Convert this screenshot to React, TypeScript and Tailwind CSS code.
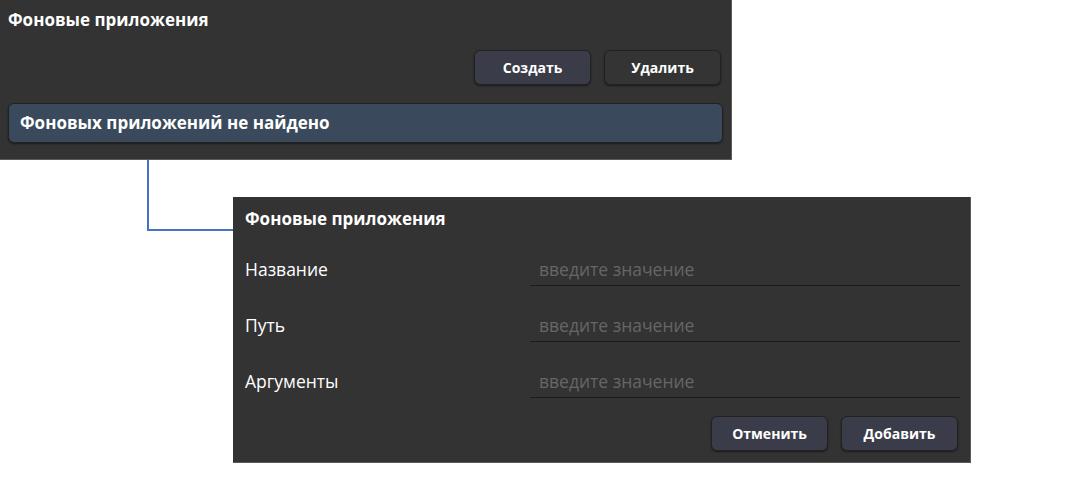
import React from 'react';

const font = { fontFamily: '"Open Sans", "Noto Sans", sans-serif' };

const Btn: React.FC<{ label: string; filled?: boolean }> = ({ label, filled }) => (
  <button
    className={
      filled
        ? 'w-[117px] h-[35px] rounded-md border border-[#222] bg-[#3b3c49] text-white text-[14px] font-bold shadow-[0_1px_2px_rgba(0,0,0,0.5)]'
        : 'w-[117px] h-[35px] rounded-md border border-[#222] bg-[#343434] text-white text-[14px] font-bold shadow-[0_1px_2px_rgba(0,0,0,0.5)]'
    }
  >
    {label}
  </button>
);

const Field: React.FC<{ label: string }> = ({ label }) => (
  <div className="flex items-end h-[56px]">
    <span className="w-[285px] text-white text-[17.5px] pb-[4px]">{label}</span>
    <div className="flex-1 border-b border-[#1c1c1c] pl-[9px] pb-[3px] text-[17.5px] text-[#666]">
      введите значение
    </div>
  </div>
);

export default function App() {
  return (
    <div className="w-[1072px] h-[485px] bg-white" style={font}>
      {/* list panel */}
      <div className="w-[732px] h-[160px] bg-[#333] border-r border-b border-[#5a5a5a] px-[8px] pt-[7px]">
        <div className="text-white text-[17px] font-bold leading-[26px]">Фоновые приложения</div>
        <div className="flex justify-end gap-[13px] mt-[17px] pr-[2px]">
          <Btn label="Создать" filled />
          <Btn label="Удалить" />
        </div>
        <div className="mt-[18px] h-[40px] rounded-md border border-[#222] bg-[#3a4a5c] flex items-center px-[11px] text-white text-[17px] font-bold shadow-[0_1px_2px_rgba(0,0,0,0.5)]">
          Фоновых приложений не найдено
        </div>
      </div>

      {/* add dialog */}
      <div className="flex items-start">
        <svg width="233" height="72" className="shrink-0">
          <path d="M148 0 V70 H233" fill="none" stroke="#4472c4" strokeWidth="2" />
        </svg>
        <div className="mt-[37px] w-[738px] h-[266px] bg-[#333] border-r border-b border-[#5a5a5a] pl-[12px] pr-[10px] pt-[9px]">
          <div className="text-white text-[17px] font-bold leading-[26px]">Фоновые приложения</div>
          <div className="-mt-[2px]">
            <Field label="Название" />
            <Field label="Путь" />
            <Field label="Аргументы" />
          </div>
          <div className="flex justify-end gap-[13px] mt-[18px] pr-[2px]">
            <Btn label="Отменить" filled />
            <Btn label="Добавить" filled />
          </div>
        </div>
      </div>
    </div>
  );
}
